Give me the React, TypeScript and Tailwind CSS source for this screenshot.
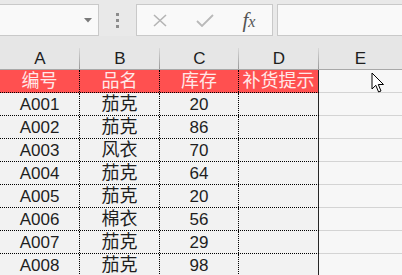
import React from "react";

const rows: [string, string, string][] = [
  ["A001", "茄克", "20"],
  ["A002", "茄克", "86"],
  ["A003", "风衣", "70"],
  ["A004", "茄克", "64"],
  ["A005", "茄克", "20"],
  ["A006", "棉衣", "56"],
  ["A007", "茄克", "29"],
  ["A008", "茄克", "98"],
];

const font = { fontFamily: '"Liberation Sans","Noto Sans CJK SC",sans-serif' };

function Cell({ children, w, last, cls }: { children?: React.ReactNode; w: string; last?: boolean; cls?: string }) {
  return (
    <div
      className={
        w +
        " h-full flex items-center justify-center shrink-0 " +
        (cls ?? "") +
        " " +
        (last ? "border-r border-solid border-[#262626]" : "border-r border-dotted border-black")
      }
    >
      {children}
    </div>
  );
}

export default function App() {
  return (
    <div className="w-[402px] h-[275px] overflow-hidden bg-[#e9e9e9] relative text-[#1e1e1e]" style={font}>
      {/* toolbar */}
      <div className="h-[36px] flex items-start pt-[4px]">
        <div className="w-[99px] h-[32px] bg-[#f9f9f9] border border-[#c9c9c9] border-l-0 flex items-center justify-end pr-[6px]">
          <svg width="8" height="5" viewBox="0 0 8 5">
            <path d="M0 0 H8 L4 4.5 Z" fill="#7a7a7a" />
          </svg>
        </div>
        <div className="w-[37px] h-[32px] flex flex-col items-center justify-center gap-[3px]">
          <div className="w-[3px] h-[3px] bg-[#8c8c8c]" />
          <div className="w-[3px] h-[3px] bg-[#8c8c8c]" />
          <div className="w-[3px] h-[3px] bg-[#8c8c8c]" />
        </div>
        <div className="w-[137px] h-[32px] bg-[#f9f9f9] border border-[#c9c9c9] flex items-center">
          <div className="w-[46px] flex justify-center">
            <svg width="14" height="13" viewBox="0 0 14 13">
              <path d="M1 1 L13 12 M13 1 L1 12" stroke="#b4b4b4" strokeWidth="1.6" />
            </svg>
          </div>
          <div className="w-[44px] flex justify-center">
            <svg width="18" height="13" viewBox="0 0 18 13">
              <path d="M1 7 L6 12 L17 1" stroke="#b9b9b9" strokeWidth="1.8" fill="none" />
            </svg>
          </div>
          <div className="w-[44px] flex justify-center">
            <span className="text-[21px] italic text-[#555555] leading-none" style={{ fontFamily: '"Liberation Serif",serif' }}>
              f<span className="text-[16px]">x</span>
            </span>
          </div>
        </div>
        <div className="ml-[4px] flex-1 h-[32px] bg-[#f9f9f9] border border-[#c9c9c9] border-r-0" />
      </div>

      {/* column headers */}
      <div className="h-[34px] flex border-b border-[#a8a8a8] bg-[#e6e6e6]">
        {["A", "B", "C", "D"].map((c, i) => (
          <div
            key={c}
            className={
              (i === 2 ? "w-[79px]" : "w-[80px]") +
              " h-full flex items-end justify-center pb-[2px] relative text-[17px] leading-none"
            }
          >
            {c}
            <div className="absolute right-0 top-[12px] bottom-0 w-px bg-gradient-to-b from-[#d8d8d8] to-[#9a9a9a]" />
          </div>
        ))}
        <div className="flex-1 h-full flex items-end justify-center pb-[2px] text-[17px] leading-none">E</div>
      </div>

      {/* red header row */}
      <div className="h-[23px] flex text-[18px] leading-none text-[#ffe8e8]">
        <div className="flex bg-[#ff5050] h-full border-b border-dotted border-black">
          <Cell w="w-[80px]">编号</Cell>
          <Cell w="w-[80px]">品名</Cell>
          <Cell w="w-[79px]">库存</Cell>
          <Cell w="w-[80px]" last>补货提示</Cell>
        </div>
        <div className="flex-1 h-full bg-[#f7f7f7] border-b border-[#d4d4d4]" />
      </div>

      {rows.map((r) => (
        <div key={r[0]} className="h-[23px] flex text-[17px] leading-none">
          <div className="flex h-full bg-[#f2f2f2] border-b border-dotted border-black">
            <Cell w="w-[80px]">{r[0]}</Cell>
            <Cell w="w-[80px]" cls="text-[18px]">{r[1]}</Cell>
            <Cell w="w-[79px]">{r[2]}</Cell>
            <Cell w="w-[80px]" last />
          </div>
          <div className="flex-1 h-full bg-[#f7f7f7] border-b border-[#d4d4d4]" />
        </div>
      ))}

      {/* mouse cursor */}
      <svg className="absolute left-[371px] top-[72px]" width="14" height="22" viewBox="0 0 14 22">
        <path
          d="M1 1 L1 17 L4.8 13.3 L7.6 20 L10 19 L7.3 12.5 L12.5 12.5 Z"
          fill="#ffffff"
          stroke="#000000"
          strokeWidth="1"
          strokeLinejoin="round"
        />
      </svg>
    </div>
  );
}
